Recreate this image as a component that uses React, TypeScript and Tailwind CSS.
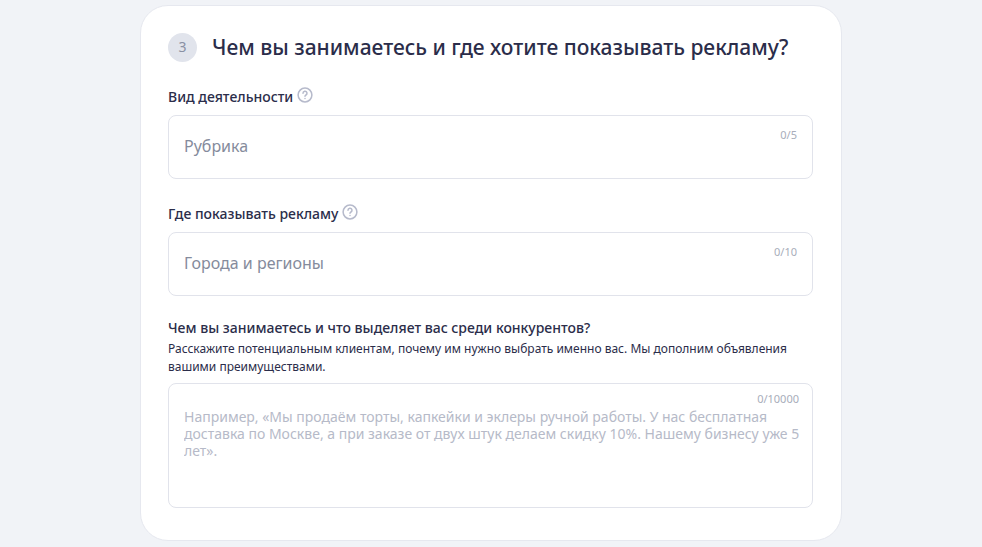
import React from 'react';

function HelpButton({ label }: { label: string }) {
  return (
    <button type="button" aria-label={label} className="mb-1 text-[#b6bacb]">
      <svg width="16" height="16" viewBox="0 0 16 16" fill="none" stroke="currentColor" strokeWidth="1.5" strokeLinecap="round" strokeLinejoin="round" className="block">
        <circle cx="8" cy="8" r="6.9" />
        <path d="M6 6.3a2 2 0 1 1 3 1.7c-.7.4-1 .7-1 1.3" />
        <path d="M8 11.5v.1" />
      </svg>
    </button>
  );
}

function PickerField({ id, label, placeholder, counter }: { id: string; label: string; placeholder: string; counter: string }) {
  return (
    <div>
      <div className="flex h-5 items-center gap-1">
        <label htmlFor={id} className="text-sm leading-5 font-medium">{label}</label>
        <HelpButton label={`Подсказка: ${label}`} />
      </div>
      <div className="mt-2 flex h-16 rounded-lg border border-[#e1e3eb] px-[15px]">
        <input id={id} type="text" placeholder={placeholder} className="min-w-0 flex-1 bg-transparent pb-0.5 text-base outline-none placeholder:text-[#858b9c]" />
        <span className="pt-[11px] text-[11px] leading-4 text-[#a8adba]">{counter}</span>
      </div>
    </div>
  );
}

export default function App() {
  return (
    <main className="min-h-screen bg-[#f1f3f7] px-4 py-[5px] font-['Noto_Sans',sans-serif] text-[#2b2d4a]">
      <form className="mx-auto max-w-[702px] rounded-[28px] border border-[#e6e8ef] bg-white pt-[25px] pr-7 pb-8 pl-[27px]">
        <h2 className="flex items-center gap-[15px] text-[21px] leading-8 font-medium">
          <span className="flex size-[29px] shrink-0 items-center justify-center rounded-full bg-[#e1e4ec] text-sm font-normal text-[#8990a3]">3</span>
          Чем вы занимаетесь и где хотите показывать рекламу?
        </h2>
        <div className="mt-6 flex flex-col gap-[25px]">
          <PickerField id="activity" label="Вид деятельности" placeholder="Рубрика" counter="0/5" />
          <PickerField id="regions" label="Где показывать рекламу" placeholder="Города и регионы" counter="0/10" />
        </div>
        <div className="mt-[22px]">
          <label htmlFor="about" className="block text-sm leading-5 font-medium">Чем вы занимаетесь и что выделяет вас среди конкурентов?</label>
          <p id="about-hint" className="mt-0.5 text-xs leading-[18px]">Расскажите потенциальным клиентам, почему им нужно выбрать именно вас. Мы дополним объявления вашими преимуществами.</p>
          <div className="mt-[7px] flex h-[125px] flex-col rounded-lg border border-[#e1e3eb] pt-[7px] pr-1 pl-[15px]">
            <span className="self-end pr-[9px] text-[11px] leading-4 text-[#a8adba]">0/10000</span>
            <textarea id="about" aria-describedby="about-hint" className="mt-px flex-1 resize-none bg-transparent text-sm leading-[17px] outline-none placeholder:text-[#b6bac8]" placeholder="Например, «Мы продаём торты, капкейки и эклеры ручной работы. У нас бесплатная доставка по Москве, а при заказе от двух штук делаем скидку 10%. Нашему бизнесу уже 5 лет»." />
          </div>
        </div>
      </form>
    </main>
  );
}
